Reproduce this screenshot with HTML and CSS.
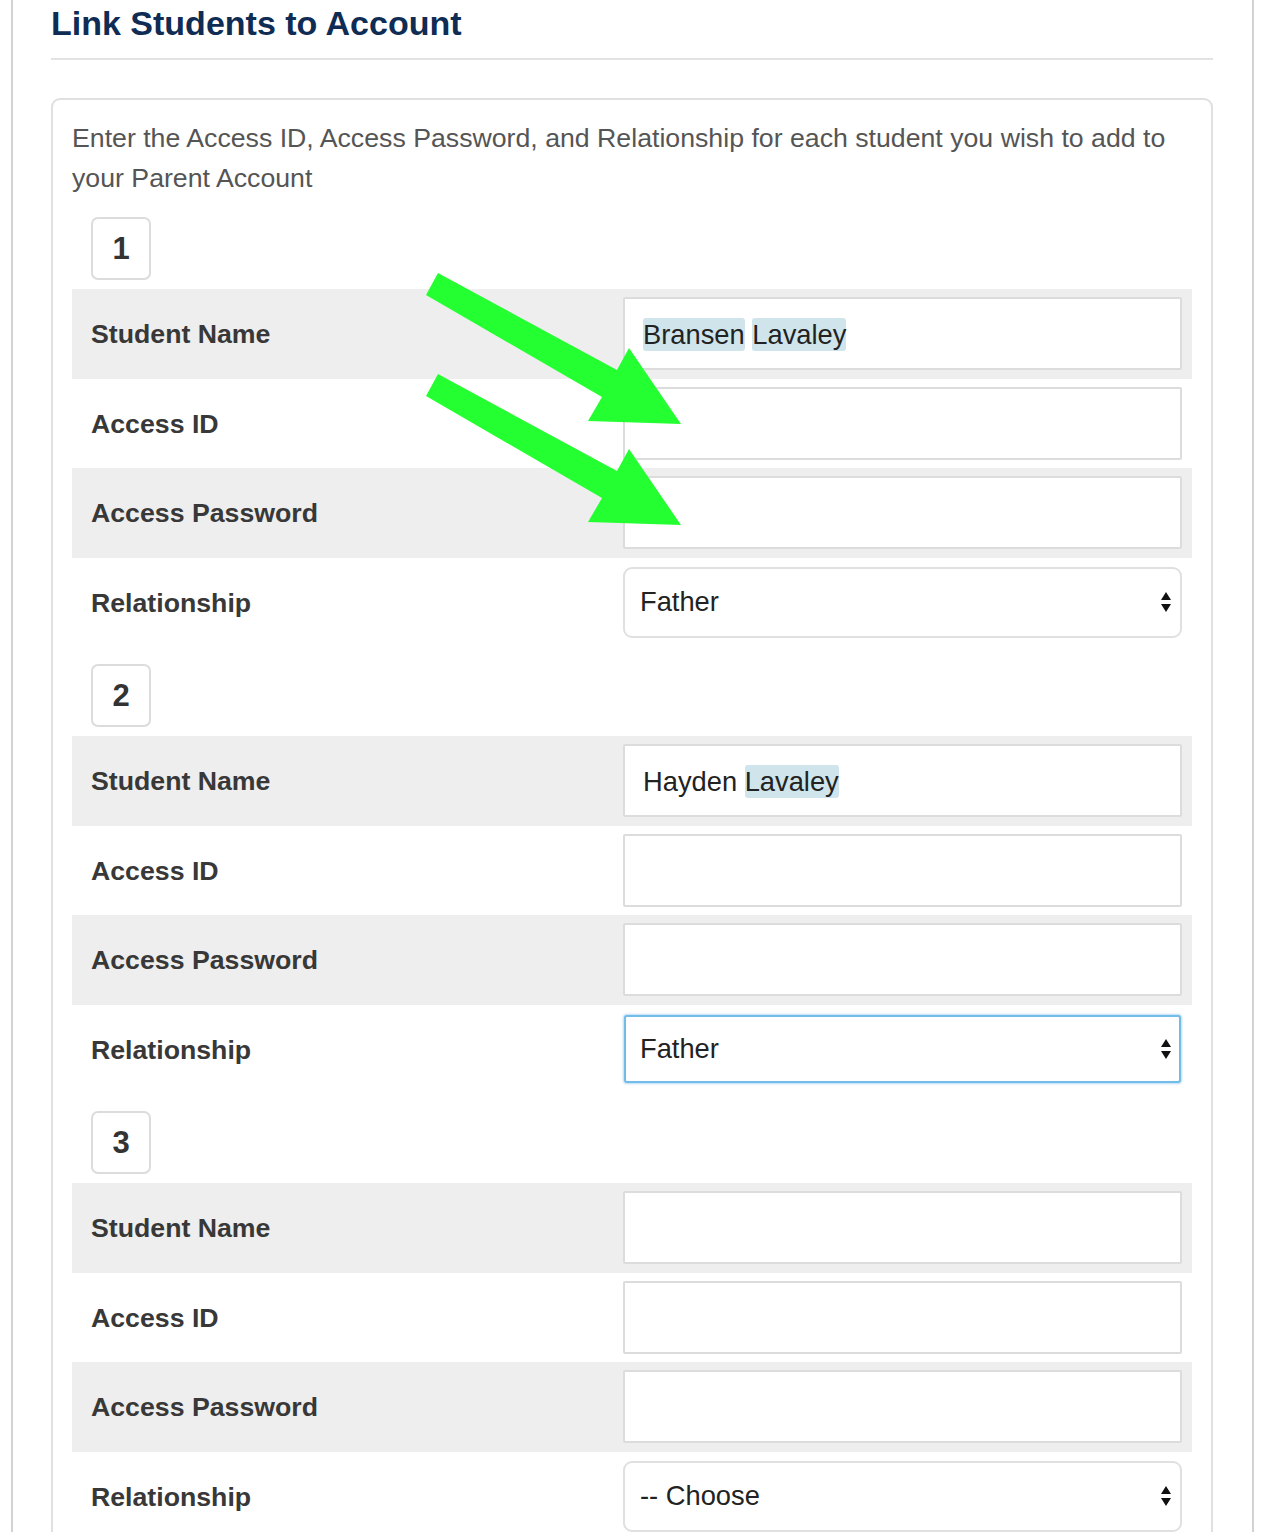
FILE: index.html
```html
<!DOCTYPE html>
<html>
<head>
<meta charset="utf-8">
<link rel="stylesheet" href="styles.css">
</head>
<body>
<div class="page">
  <h1 class="title">Link Students to Account</h1>
  <div class="rule"></div>
  <div class="panel">
    <p class="intro">Enter the Access ID, Access Password, and Relationship for each student you wish to add to your Parent Account</p>

    <div class="group">
      <div class="num">1</div>
      <div class="row shade"><div class="label">Student Name</div><div class="field"><span class="val"><span class="hl">Bransen</span> <span class="hl">Lavaley</span></span></div></div>
      <div class="row"><div class="label">Access ID</div><div class="field"></div></div>
      <div class="row shade"><div class="label">Access Password</div><div class="field"></div></div>
      <div class="row"><div class="label">Relationship</div><div class="select"><span>Father</span><svg class="caret" width="12" height="22" viewBox="0 0 12 22"><path d="M6 1 L11 9 L1 9 Z M1 13 L11 13 L6 21 Z" fill="#111"/></svg></div></div>
    </div>

    <div class="group">
      <div class="num">2</div>
      <div class="row shade"><div class="label">Student Name</div><div class="field"><span class="val">Hayden <span class="hl">Lavaley</span></span></div></div>
      <div class="row"><div class="label">Access ID</div><div class="field"></div></div>
      <div class="row shade"><div class="label">Access Password</div><div class="field"></div></div>
      <div class="row"><div class="label">Relationship</div><div class="select focus"><span>Father</span><svg class="caret" width="12" height="22" viewBox="0 0 12 22"><path d="M6 1 L11 9 L1 9 Z M1 13 L11 13 L6 21 Z" fill="#111"/></svg></div></div>
    </div>

    <div class="group">
      <div class="num">3</div>
      <div class="row shade"><div class="label">Student Name</div><div class="field"></div></div>
      <div class="row"><div class="label">Access ID</div><div class="field"></div></div>
      <div class="row shade"><div class="label">Access Password</div><div class="field"></div></div>
      <div class="row"><div class="label">Relationship</div><div class="select"><span>-- Choose</span><svg class="caret" width="12" height="22" viewBox="0 0 12 22"><path d="M6 1 L11 9 L1 9 Z M1 13 L11 13 L6 21 Z" fill="#111"/></svg></div></div>
    </div>
  </div>
</div>
<svg class="arrows" width="1266" height="1532" viewBox="0 0 1266 1532">
  <polygon points="438,273 617,370 629,348 681,424 588,421 602,397 426,295" fill="#24ff31"/>
  <polygon points="438,374 617,471 629,449 681,525 588,522 602,498 426,396" fill="#24ff31"/>
</svg>
</body>
</html>
```

FILE: styles.css
```css
html, body {
  margin: 0;
  padding: 0;
  background: #fff;
  height: 1532px;
  overflow: hidden;
}
body {
  position: relative;
  font-family: "Liberation Sans", Arial, Helvetica, sans-serif;
}
.page {
  margin-left: 11px;
  width: 1243px;
  min-height: 1600px;
  border-left: 2px solid #d2d2d2;
  border-right: 2px solid #d2d2d2;
  padding: 3px 39px 0 38px;
  box-sizing: border-box;
}
.title {
  margin: 0;
  font-size: 34px;
  line-height: 40px;
  font-weight: bold;
  color: #0f2c54;
}
.rule {
  margin-top: 15px;
  height: 2px;
  background: #e3e3e3;
}
.panel {
  margin-top: 38px;
  border: 2px solid #e0e0e0;
  border-radius: 9px;
  padding: 18px 19px 0 19px;
  min-height: 1500px;
}
.intro {
  margin: 0;
  font-size: 26.7px;
  line-height: 40px;
  color: #555;
}
.group {
  display: flex;
  flex-direction: column;
}
.num {
  margin: 17px 0 9px 19px;
  width: 60px;
  height: 63px;
  box-sizing: border-box;
  border: 2px solid #dcdcdc;
  border-radius: 7px;
  display: flex;
  align-items: center;
  justify-content: center;
  font-size: 31px;
  font-weight: bold;
  color: #333;
}
.group:first-of-type .num {
  margin-top: 19px;
}
.row {
  height: 89.5px;
  display: grid;
  grid-template-columns: 1fr 559px;
  align-items: center;
  padding: 0 10px 0 19px;
}
.row.shade {
  background: #eeeeee;
}
.label {
  font-size: 26.7px;
  font-weight: bold;
  color: #383838;
  padding-top: 2px;
}
.field {
  height: 73px;
  box-sizing: border-box;
  border: 2px solid #dcdcdc;
  border-radius: 2px;
  background: #fff;
  display: flex;
  align-items: center;
  padding-left: 18px;
  font-size: 27.3px;
  color: #222;
}
.val {
  white-space: pre;
  padding-top: 3px;
}
.hl {
  background: #cfe5eb;
  border-radius: 3px;
  padding: 1px 0;
}
.select {
  height: 71px;
  box-sizing: border-box;
  border: 2px solid #e0e0e0;
  border-radius: 9px;
  background: #fff;
  display: flex;
  align-items: center;
  justify-content: space-between;
  padding: 0 8px 0 15px;
  font-size: 27.3px;
  color: #222;
}
.select.focus {
  height: 68px;
  margin: 0 1px 0 1px;
  border: 2px solid #72bde8;
  border-radius: 3px;
  box-shadow: 0 0 2px 1px rgba(102, 175, 233, 0.45);
  padding-left: 14px;
  padding-right: 7px;
}
.caret {
  display: block;
}
.arrows {
  position: absolute;
  left: 0;
  top: 0;
  pointer-events: none;
}
```
